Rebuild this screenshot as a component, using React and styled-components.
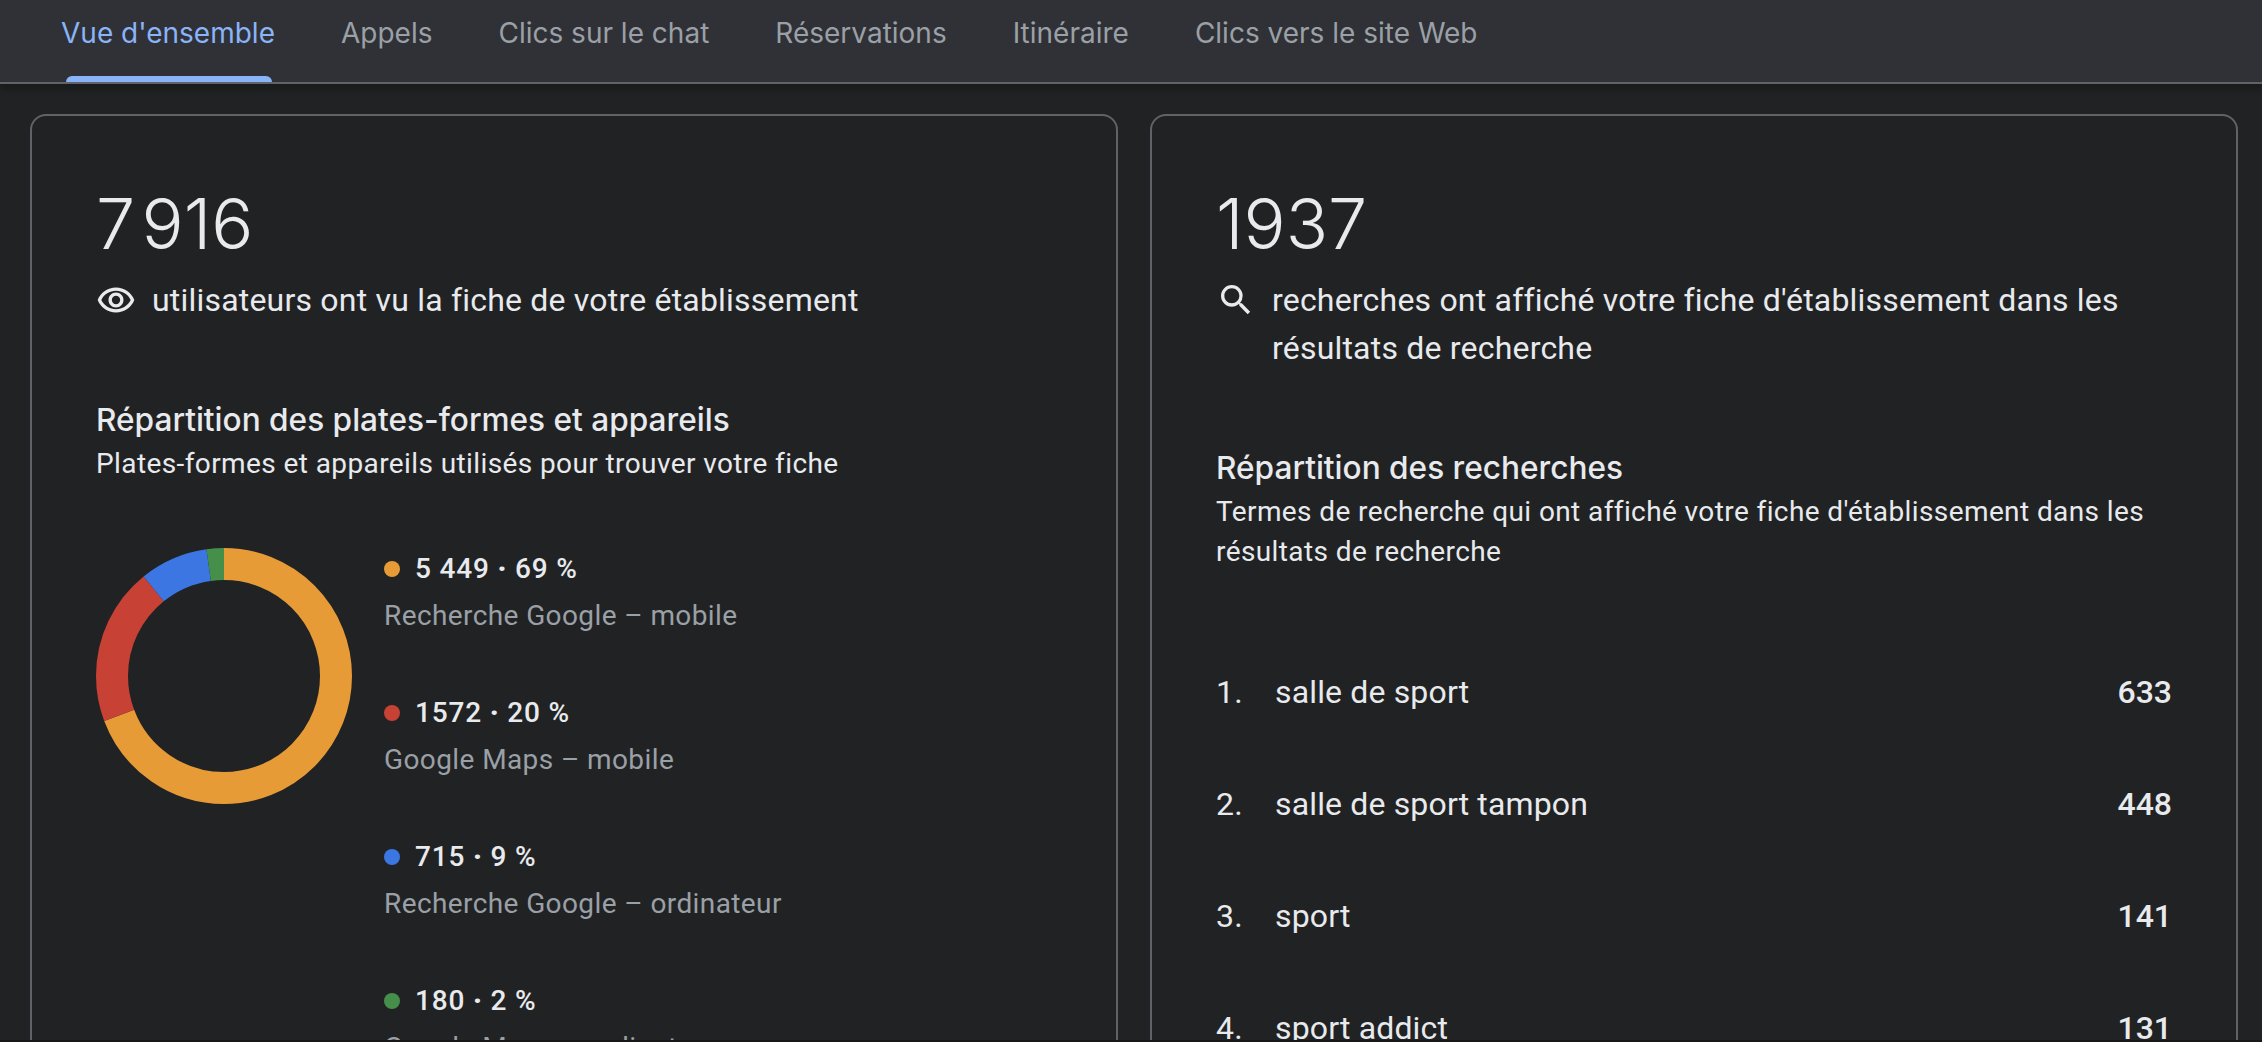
import styled, { createGlobalStyle } from 'styled-components'

const GlobalStyle = createGlobalStyle`
  html, body {
    margin: 0;
    padding: 0;
    background: #212224;
    overflow: hidden;
  }
  * { box-sizing: border-box; }
`

const tabs = ["Vue d'ensemble", 'Appels', 'Clics sur le chat', 'Réservations', 'Itinéraire', 'Clics vers le site Web']

const legend = [
  { count: '5\u00A0449', pct: '69', label: 'Recherche Google – mobile', color: '#e69b37' },
  { count: '1572', pct: '20', label: 'Google Maps – mobile', color: '#c74134' },
  { count: '715', pct: '9', label: 'Recherche Google – ordinateur', color: '#3b76e3' },
  { count: '180', pct: '2', label: 'Google Maps – ordinateur', color: '#458f4b' },
]

const terms = [
  { term: 'salle de sport', value: 633 },
  { term: 'salle de sport tampon', value: 448 },
  { term: 'sport', value: 141 },
  { term: 'sport addict', value: 131 },
]

// radius of the ring, stroke is 32 so the outer edge lands on 128
const RADIUS = 112
const CIRC = 2 * Math.PI * RADIUS

function Donut() {
  let offset = 0
  const shares = [69.2, 19.9, 8.6, 2.3]
  return (
    <DonutSvg viewBox="0 0 256 256">
      {shares.map((share, i) => {
        const len = (share / 100) * CIRC
        const seg = (
          <circle
            key={i}
            cx="128"
            cy="128"
            r={RADIUS}
            fill="none"
            stroke={legend[i].color}
            strokeWidth="32"
            strokeDasharray={`${len} ${CIRC - len}`}
            strokeDashoffset={-offset}
            transform="rotate(-90 128 128)"
          />
        )
        offset += len
        return seg
      })}
    </DonutSvg>
  )
}

const EyeIcon = () => (
  <IconSvg viewBox="0 0 24 24">
    <path
      fill="#e8eaed"
      d="M12 6.5c3.79 0 7.17 2.13 8.82 5.5-1.65 3.37-5.03 5.5-8.82 5.5S4.83 15.37 3.18 12C4.83 8.63 8.21 6.5 12 6.5m0-2C7 4.5 2.73 7.61 1 12c1.73 4.39 6 7.5 11 7.5s9.27-3.11 11-7.5c-1.73-4.39-6-7.5-11-7.5zm0 5a2.5 2.5 0 0 1 0 5 2.5 2.5 0 0 1 0-5m0-2c-2.48 0-4.5 2.02-4.5 4.5s2.02 4.5 4.5 4.5 4.5-2.02 4.5-4.5-2.02-4.5-4.5-4.5z"
    />
  </IconSvg>
)

const SearchIcon = () => (
  <IconSvg viewBox="0 0 24 24">
    <path
      fill="#e8eaed"
      d="M15.5 14h-.79l-.28-.27A6.47 6.47 0 0 0 16 9.5 6.5 6.5 0 1 0 9.5 16c1.61 0 3.09-.59 4.23-1.57l.27.28v.79l5 4.99L20.49 19l-4.99-5zm-6 0C7.01 14 5 11.99 5 9.5S7.01 5 9.5 5 14 7.01 14 9.5 11.99 14 9.5 14z"
    />
  </IconSvg>
)

function App() {
  return (
    <Page>
      <GlobalStyle />
      <TabBar>
        {tabs.map((tab, i) => (
          <Tab key={tab} $active={i === 0}>{tab}</Tab>
        ))}
      </TabBar>
      <Cards>
        <Card>
          <BigNumber>7{'\u200A'}916</BigNumber>
          <Summary>
            <EyeIcon />
            <SummaryText>utilisateurs ont vu la fiche de votre établissement</SummaryText>
          </Summary>
          <SectionTitle>Répartition des plates-formes et appareils</SectionTitle>
          <SectionHint>Plates-formes et appareils utilisés pour trouver votre fiche</SectionHint>
          <Breakdown>
            <Donut />
            <Legend>
              {legend.map((item) => (
                <LegendItem key={item.label}>
                  <LegendValue>
                    <Dot $color={item.color} />
                    <span>{item.count} <Separator>·</Separator> {item.pct} %</span>
                  </LegendValue>
                  <LegendLabel>{item.label}</LegendLabel>
                </LegendItem>
              ))}
            </Legend>
          </Breakdown>
        </Card>
        <Card>
          <BigNumber>1937</BigNumber>
          <Summary>
            <SearchIcon />
            <SummaryText>recherches ont affiché votre fiche d'établissement dans les résultats de recherche</SummaryText>
          </Summary>
          <SectionTitle>Répartition des recherches</SectionTitle>
          <SectionHint>Termes de recherche qui ont affiché votre fiche d'établissement dans les résultats de recherche</SectionHint>
          <TermList>
            {terms.map((row, i) => (
              <TermRow key={row.term}>
                <TermIndex>{i + 1}.</TermIndex>
                <TermName>{row.term}</TermName>
                <TermValue>{row.value}</TermValue>
              </TermRow>
            ))}
          </TermList>
        </Card>
      </Cards>
      <BottomEdge />
    </Page>
  )
}

const Page = styled.div`
  position: relative;
  width: 2262px;
  height: 1042px;
  overflow: hidden;
  background: #212224;
  color: #e8eaed;
  font-family: Roboto, "Liberation Sans", sans-serif;
`

const TabBar = styled.div`
  position: relative;
  display: flex;
  gap: 66px;
  height: 84px;
  padding-left: 61px;
  background: #303136;
  border-bottom: 2px solid #5f6368;
  box-shadow: 0 6px 6px rgba(0, 0, 0, 0.22);
`

const Tab = styled.div`
  position: relative;
  height: 66px;
  line-height: 66px;
  font-family: Inter, Roboto, sans-serif;
  font-size: 28px;
  color: ${(p) => (p.$active ? '#8ab4f8' : '#9aa0a6')};

  ${(p) => p.$active && `
    &::after {
      content: '';
      position: absolute;
      left: 5px;
      right: 3px;
      top: 76px;
      height: 6px;
      background: #8ab4f8;
      border-radius: 6px 6px 0 0;
    }
  `}
`

const Cards = styled.div`
  display: grid;
  grid-template-columns: 1088px 1088px;
  gap: 32px;
  padding: 30px 0 0 30px;
`

const Card = styled.section`
  height: 1100px;
  padding: 64px;
  border: 2px solid #5f6368;
  border-radius: 16px;
  background: #212224;
`

const BigNumber = styled.div`
  font-family: Inter, Roboto, sans-serif;
  font-size: 70px;
  font-weight: 300;
  line-height: 88px;
  color: #e8eaed;
`

const Summary = styled.div`
  display: flex;
  gap: 16px;
  margin-top: 8px;
`

const IconSvg = styled.svg`
  flex: none;
  width: 40px;
  height: 40px;
  margin-top: 4px;
`

const SummaryText = styled.div`
  font-size: 32px;
  line-height: 48px;
  letter-spacing: 0.2px;
`

const SectionTitle = styled.div`
  margin-top: 72px;
  font-family: Inter, Roboto, sans-serif;
  font-size: 31.6px;
  font-weight: 500;
  line-height: 48px;
`

const SectionHint = styled.div`
  font-size: 28px;
  line-height: 40px;
  letter-spacing: 0.4px;
`

const Breakdown = styled.div`
  display: flex;
  gap: 32px;
  margin-top: 64px;
`

const DonutSvg = styled.svg`
  flex: none;
  width: 256px;
  height: 256px;
`

const Legend = styled.div`
  display: flex;
  flex-direction: column;
  gap: 48px;
  margin-top: -4px;
`

const LegendItem = styled.div`
  height: 96px;
`

const LegendValue = styled.div`
  display: flex;
  align-items: center;
  height: 48px;
  font-size: 28px;
  font-weight: 500;
  letter-spacing: 0.8px;
`

const Separator = styled.span`
  font-weight: 900;
`

const Dot = styled.span`
  width: 16px;
  height: 16px;
  margin-top: 2px;
  margin-right: 15px;
  border-radius: 50%;
  background: ${(p) => p.$color};
`

const LegendLabel = styled.div`
  font-size: 28px;
  line-height: 48px;
  letter-spacing: 0.4px;
  color: #9aa0a6;
`

const TermList = styled.div`
  display: flex;
  flex-direction: column;
  margin-top: 64px;
`

const TermRow = styled.div`
  display: flex;
  align-items: center;
  height: 112px;
  font-size: 32px;
  letter-spacing: 0.15px;
`

const TermIndex = styled.span`
  width: 59px;
`

const TermName = styled.span`
  flex: 1;
`

const TermValue = styled.span`
  font-weight: 500;
  letter-spacing: 0;
`

const BottomEdge = styled.div`
  position: absolute;
  left: 0;
  right: 0;
  bottom: 0;
  height: 2px;
  background: #17181a;
`

export default App
